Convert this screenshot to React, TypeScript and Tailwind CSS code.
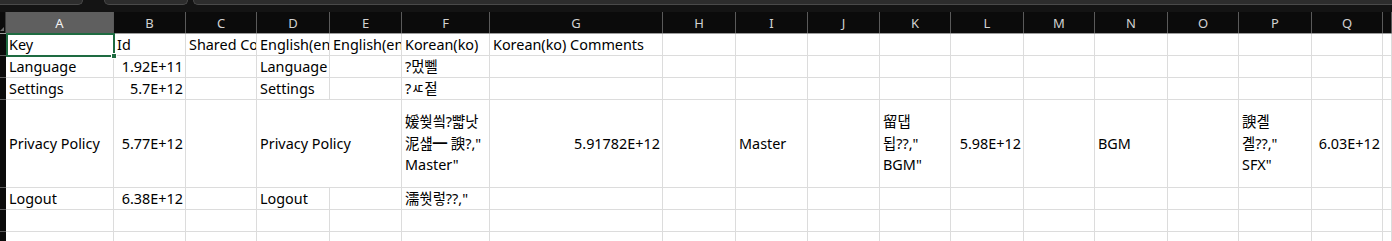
import React from 'react';

type Cell = { t: string | string[]; right?: boolean; span?: boolean };

const COLS = ['A', 'B', 'C', 'D', 'E', 'F', 'G', 'H', 'I', 'J', 'K', 'L', 'M', 'N', 'O', 'P', 'Q', 'R'];

// row heights incl. bottom grid line
const ROWS: { h: string; cells: Record<string, Cell> }[] = [
  {
    h: 'h-[22px]',
    cells: {
      A: { t: 'Key' },
      B: { t: 'Id' },
      C: { t: 'Shared Comments' },
      D: { t: 'English(en)' },
      E: { t: 'English(en) Comments' },
      F: { t: 'Korean(ko)' },
      G: { t: 'Korean(ko) Comments' },
    },
  },
  {
    h: 'h-[22px]',
    cells: {
      A: { t: 'Language' },
      B: { t: '1.92E+11', right: true },
      D: { t: 'Language' },
      F: { t: '?멌뻴' },
    },
  },
  {
    h: 'h-[22px]',
    cells: {
      A: { t: 'Settings' },
      B: { t: '5.7E+12', right: true },
      D: { t: 'Settings' },
      F: { t: '?ㅼ젙' },
    },
  },
  {
    h: 'h-[88px]',
    cells: {
      A: { t: 'Privacy Policy' },
      B: { t: '5.77E+12', right: true },
      // spills over the empty E cell, like Excel does
      D: { t: 'Privacy Policy', span: true },
      F: { t: ['媛쒖씤?뺣낫', '泥섎━ 諛?,"', 'Master"'] },
      G: { t: '5.91782E+12', right: true },
      I: { t: 'Master' },
      K: { t: ['留댑', '됩??,"', 'BGM"'] },
      L: { t: '5.98E+12', right: true },
      N: { t: 'BGM' },
      P: { t: ['諛곌', '곌??,"', 'SFX"'] },
      Q: { t: '6.03E+12', right: true },
    },
  },
  {
    h: 'h-[22px]',
    cells: {
      A: { t: 'Logout' },
      B: { t: '6.38E+12', right: true },
      D: { t: 'Logout' },
      F: { t: '濡쒓렇??,"' },
    },
  },
  { h: 'h-[22px]', cells: {} },
  { h: 'h-[22px]', cells: {} },
];

const grid =
  'grid grid-cols-[6px_108px_72px_71px_73px_72px_88px_173px_73px_72px_72px_71px_73px_71px_73px_71px_73px_71px_1fr]';

function TopBar() {
  return (
    <div className="flex h-[12px] items-start bg-[#141414]">
      <div className="h-[5px] w-[83px] shrink-0 rounded-br-[5px] border-b border-r border-[#4a4a4a] bg-[#2d2d2d]" />
      <div className="ml-[21px] h-[5px] w-[84px] shrink-0 rounded-b-[5px] border-x border-b border-[#4a4a4a] bg-[#2d2d2d]" />
      <div className="ml-[5px] h-[5px] flex-1 rounded-bl-[5px] border-b border-l border-[#4a4a4a] bg-[#2d2d2d]" />
    </div>
  );
}

function HeaderRow() {
  return (
    <div className={`${grid} h-[22px] border-b border-[#9d9d9d] bg-[#0b0b0b]`}>
      <div className="flex items-end justify-end border-r border-[#3a3a3a] pb-[2px] pr-[1px]">
        <div className="h-0 w-0 border-r-[4px] border-t-[4px] border-r-[#6b6b6b] border-t-transparent" />
      </div>
      {COLS.map((c) => (
        <div
          key={c}
          className={`flex items-center justify-center overflow-hidden border-r border-[#5a5a5a] pt-[2px] text-[13px] ${
            c === 'A' ? 'bg-[#5f5f5f] text-[#f2f2f2]' : 'text-[#d2d2d2]'
          }`}
        >
          {c === 'R' ? '' : c}
        </div>
      ))}
    </div>
  );
}

function CellView({ cell }: { cell?: Cell }) {
  if (!cell) return <div className="border-b border-r border-[#dcdcdc]" />;
  const lines = Array.isArray(cell.t) ? cell.t : [cell.t];
  return (
    <div
      className={`flex flex-col justify-center overflow-hidden whitespace-nowrap border-b border-r border-[#dcdcdc] ${
        cell.right ? 'items-end pr-[2px]' : 'items-start pl-[3px]'
      } ${cell.span ? 'col-span-2' : ''}`}
    >
      {lines.map((l, i) => (
        <span key={i} className={lines.length > 1 ? 'leading-[21.5px]' : 'leading-[20px]'}>
          {l}
        </span>
      ))}
    </div>
  );
}

export default function App() {
  return (
    <div className="h-[241px] w-[1392px] overflow-hidden bg-white font-['Noto_Sans','Noto_Sans_CJK_KR',sans-serif] text-[14.4px] text-black">
      <TopBar />
      <HeaderRow />
      <div className="relative">
        {ROWS.map((r, ri) => {
          const skip = new Set<string>();
          COLS.forEach((c, i) => {
            if (r.cells[c]?.span) skip.add(COLS[i + 1]);
          });
          return (
            <div key={ri} className={`${grid} ${r.h}`}>
              <div className="border-b border-[#5a5a5a] bg-[#0b0b0b]" />
              {COLS.filter((c) => !skip.has(c)).map((c) => (
                <CellView key={c} cell={r.cells[c]} />
              ))}
            </div>
          );
        })}
        {/* active cell A1 */}
        <div className="pointer-events-none absolute left-[6px] top-[-1px] h-[24px] w-[109px] border-2 border-[#1e6b41]">
          <div className="absolute bottom-[-4px] right-[-4px] h-[6px] w-[6px] border border-white bg-[#1e6b41]" />
        </div>
      </div>
    </div>
  );
}
